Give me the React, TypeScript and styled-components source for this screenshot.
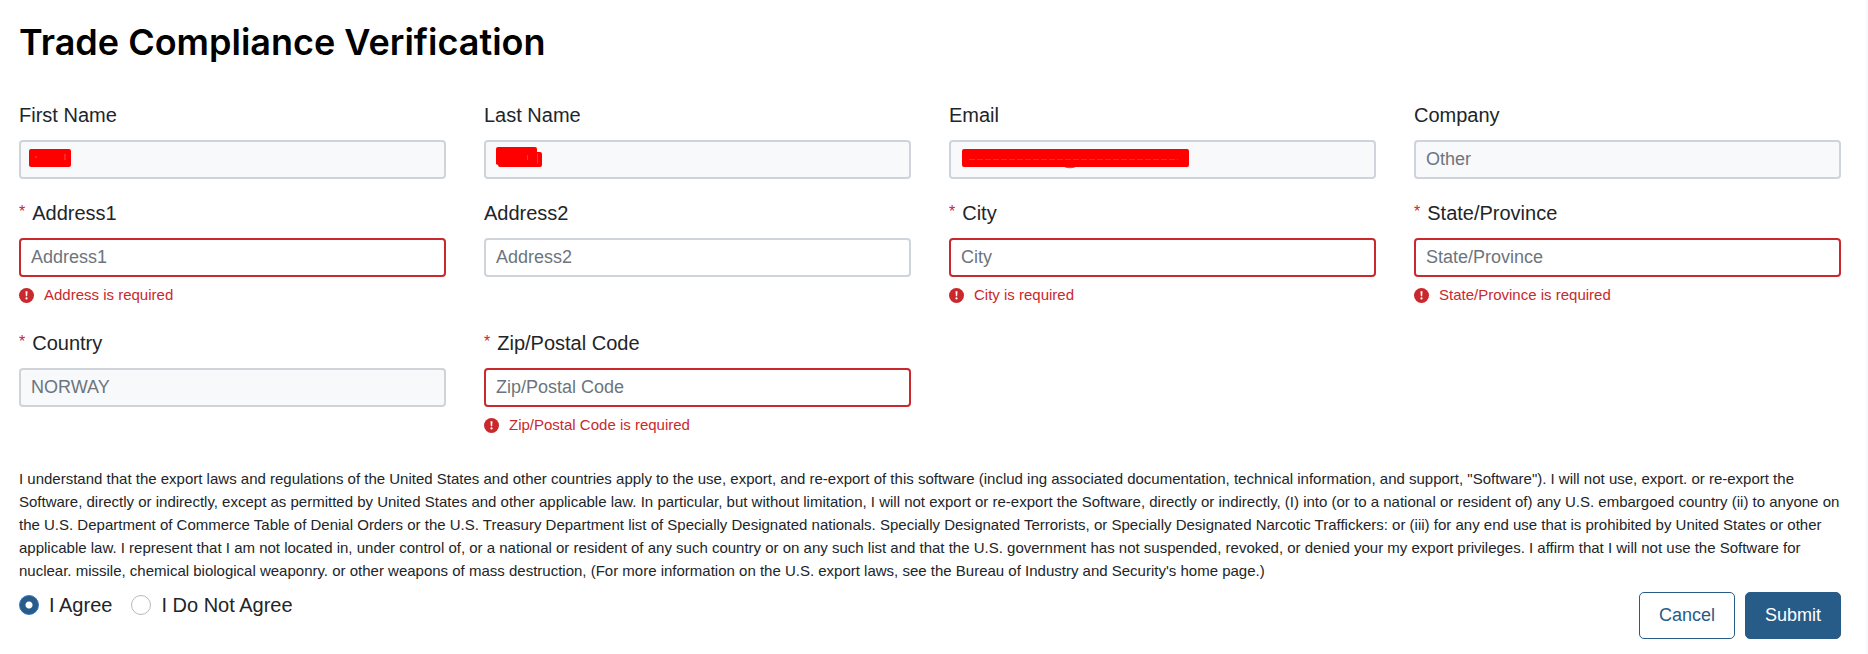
import React, { useState } from "react";
import styled, { createGlobalStyle } from "styled-components";

const GlobalStyle = createGlobalStyle`
  *, *::before, *::after { box-sizing: border-box; }
  body {
    margin: 0;
    background: #ffffff;
    color: #212529;
    font-family: "Liberation Sans", Arial, sans-serif;
    font-size: 20px;
    line-height: 30px;
  }
`;

const Page = styled.main`
  min-height: 100vh;
  padding: 16px 25px 15px 19px;
  border-right: 2px solid #f7f8fa;
`;

const Title = styled.h1`
  margin: 0 0 32px;
  color: #000000;
  font-family: Inter, sans-serif;
  font-size: 36px;
  font-weight: 600;
  line-height: 52px;
`;

const Grid = styled.div`
  display: grid;
  grid-template-columns: repeat(4, minmax(0, 1fr));
  gap: 19px 38px;
`;

const FieldBox = styled.div`
  display: flex;
  flex-direction: column;
`;

const Label = styled.label`
  margin-bottom: 10px;
`;

const Star = styled.span`
  margin-right: 7px;
  color: #c9282d;
  font-size: 16px;
  line-height: 20px;
  vertical-align: 3px;
`;

const Control = styled.div`
  position: relative;
  display: flex;
`;

const Input = styled.input<{ $invalid?: boolean }>`
  width: 100%;
  height: 39px;
  padding: 0 10px;
  border: 2px solid ${(p) => (p.$invalid ? "#c9282d" : "#ced4da")};
  border-radius: 4px;
  background: #ffffff;
  color: #6c757d;
  font: inherit;
  font-size: 18px;

  &::placeholder { color: #6c757d; opacity: 1; }
  &:disabled { background: #f8f9fb; color: #6c757d; }
`;

const Redaction = styled.svg`
  position: absolute;
  top: 0;
  left: 0;
  pointer-events: none;
`;

const ErrorText = styled.p`
  display: flex;
  align-items: center;
  gap: 10px;
  margin: 7px 0 3px;
  color: #c9282d;
  font-size: 15px;
  line-height: 22px;
`;

const Terms = styled.p`
  margin: 28px 0 10px;
  font-size: 15px;
  line-height: 23px;
`;

const Footer = styled.div`
  display: flex;
  justify-content: space-between;
  align-items: flex-start;
`;

const Choices = styled.div`
  display: flex;
  gap: 19px;
  line-height: 26px;
`;

const Choice = styled.label`
  display: flex;
  align-items: center;
  gap: 10px;
`;

const Radio = styled.input`
  appearance: none;
  width: 20px;
  height: 20px;
  margin: 0;
  border: 1px solid #b5b9c1;
  border-radius: 50%;
  background: #ffffff;

  &:checked {
    border-color: #2f6fd0;
    background: radial-gradient(circle, #ffffff 3px, #275c88 4px);
  }
`;

const Actions = styled.div`
  display: flex;
  gap: 10px;
`;

const Button = styled.button<{ $primary?: boolean }>`
  height: 47px;
  padding: 0 19px 2px;
  border: 1px solid #275c88;
  border-radius: 5px;
  background: ${(p) => (p.$primary ? "#275c88" : "#ffffff")};
  color: ${(p) => (p.$primary ? "#ffffff" : "#275c88")};
  font: inherit;
  font-size: 18px;
`;

const AlertIcon = () => (
  <svg width="15" height="15" viewBox="0 0 15 15" aria-hidden="true">
    <circle cx="7.5" cy="7.5" r="7.5" fill="#c9282d" />
    <path d="M6.5 3.2h2l-.3 5H6.8z" fill="#fff" />
    <circle cx="7.5" cy="10.4" r="1.1" fill="#fff" />
  </svg>
);

interface FieldProps {
  id: string;
  label: string;
  value?: string;
  required?: boolean;
  disabled?: boolean;
  error?: string;
  children?: React.ReactNode;
}

const Field = ({ id, label, value, required, disabled, error, children }: FieldProps) => (
  <FieldBox>
    <Label htmlFor={id}>
      {required && <Star>*</Star>}
      {label}
    </Label>
    <Control>
      <Input
        id={id}
        defaultValue={value}
        placeholder={disabled ? undefined : label}
        disabled={disabled}
        $invalid={Boolean(error)}
        aria-invalid={Boolean(error)}
        aria-describedby={error ? `${id}-error` : undefined}
      />
      {children}
    </Control>
    {error && (
      <ErrorText id={`${id}-error`}>
        <AlertIcon />
        {error}
      </ErrorText>
    )}
  </FieldBox>
);

export default function App() {
  const [agree, setAgree] = useState(true);
  return (
    <>
      <GlobalStyle />
      <Page>
        <Title>Trade Compliance Verification</Title>
        <form onSubmit={(e) => e.preventDefault()}>
          <Grid>
            <Field id="first" label="First Name" disabled>
              <Redaction width="60" height="39" aria-hidden="true">
                <rect x="10" y="9" width="42" height="18" rx="2" fill="#ff0000" />
                <path d="M16 17h2M46 14v6" stroke="#ff4d4d" />
              </Redaction>
            </Field>
            <Field id="last" label="Last Name" disabled>
              <Redaction width="70" height="39" aria-hidden="true">
                <path d="M12 9q0-2 2-2h37q2 0 2 2v3h3q2 0 2 2v11q0 2-2 2H16q-2 0-2-2l-2-1z" fill="#ff0000" />
                <path d="M53.500 13.500v10M43.500 15v5" stroke="#ff3333" />
              </Redaction>
            </Field>
            <Field id="email" label="Email" disabled>
              <Redaction width="250" height="39" aria-hidden="true">
                <path d="M115 26q6 3 12 0" fill="none" stroke="#6c757d" strokeWidth="1.5" />
                <rect x="13" y="9" width="227" height="18" rx="2" fill="#ff0000" />
                <path d="M20 19.500h209" stroke="#ff2a2a" strokeDasharray="6 2" />
              </Redaction>
            </Field>
            <Field id="company" label="Company" value="Other" disabled />
            <Field id="address1" label="Address1" required error="Address is required" />
            <Field id="address2" label="Address2" />
            <Field id="city" label="City" required error="City is required" />
            <Field id="state" label="State/Province" required error="State/Province is required" />
            <Field id="country" label="Country" value="NORWAY" required disabled />
            <Field id="zip" label="Zip/Postal Code" required error="Zip/Postal Code is required" />
          </Grid>
          <Terms>
            I understand that the export laws and regulations of the United States and other countries apply to the use,
            export, and re-export of this software (includ ing associated documentation, technical information, and
            support, "Software"). I will not use, export. or re-export the Software, directly or indirectly, except as
            permitted by United States and other applicable law. In particular, but without limitation, I will not export
            or re-export the Software, directly or indirectly, (I) into (or to a national or resident of) any U.S.
            embargoed country (ii) to anyone on the U.S. Department of Commerce Table of Denial Orders or the U.S.
            Treasury Department list of Specially Designated nationals. Specially Designated Terrorists, or Specially
            Designated Narcotic Traffickers: or (iii) for any end use that is prohibited by United States or other
            applicable law. I represent that I am not located in, under control of, or a national or resident of any such
            country or on any such list and that the U.S. government has not suspended, revoked, or denied your my export
            privileges. I affirm that I will not use the Software for nuclear. missile, chemical biological weaponry. or
            other weapons of mass destruction, (For more information on the U.S. export laws, see the Bureau of Industry
            and Security's home page.)
          </Terms>
          <Footer>
            <Choices role="radiogroup" aria-label="Agreement">
              <Choice>
                <Radio type="radio" name="agreement" checked={agree} onChange={() => setAgree(true)} />
                I Agree
              </Choice>
              <Choice>
                <Radio type="radio" name="agreement" checked={!agree} onChange={() => setAgree(false)} />
                I Do Not Agree
              </Choice>
            </Choices>
            <Actions>
              <Button type="button">Cancel</Button>
              <Button type="submit" $primary>Submit</Button>
            </Actions>
          </Footer>
        </form>
      </Page>
    </>
  );
}
